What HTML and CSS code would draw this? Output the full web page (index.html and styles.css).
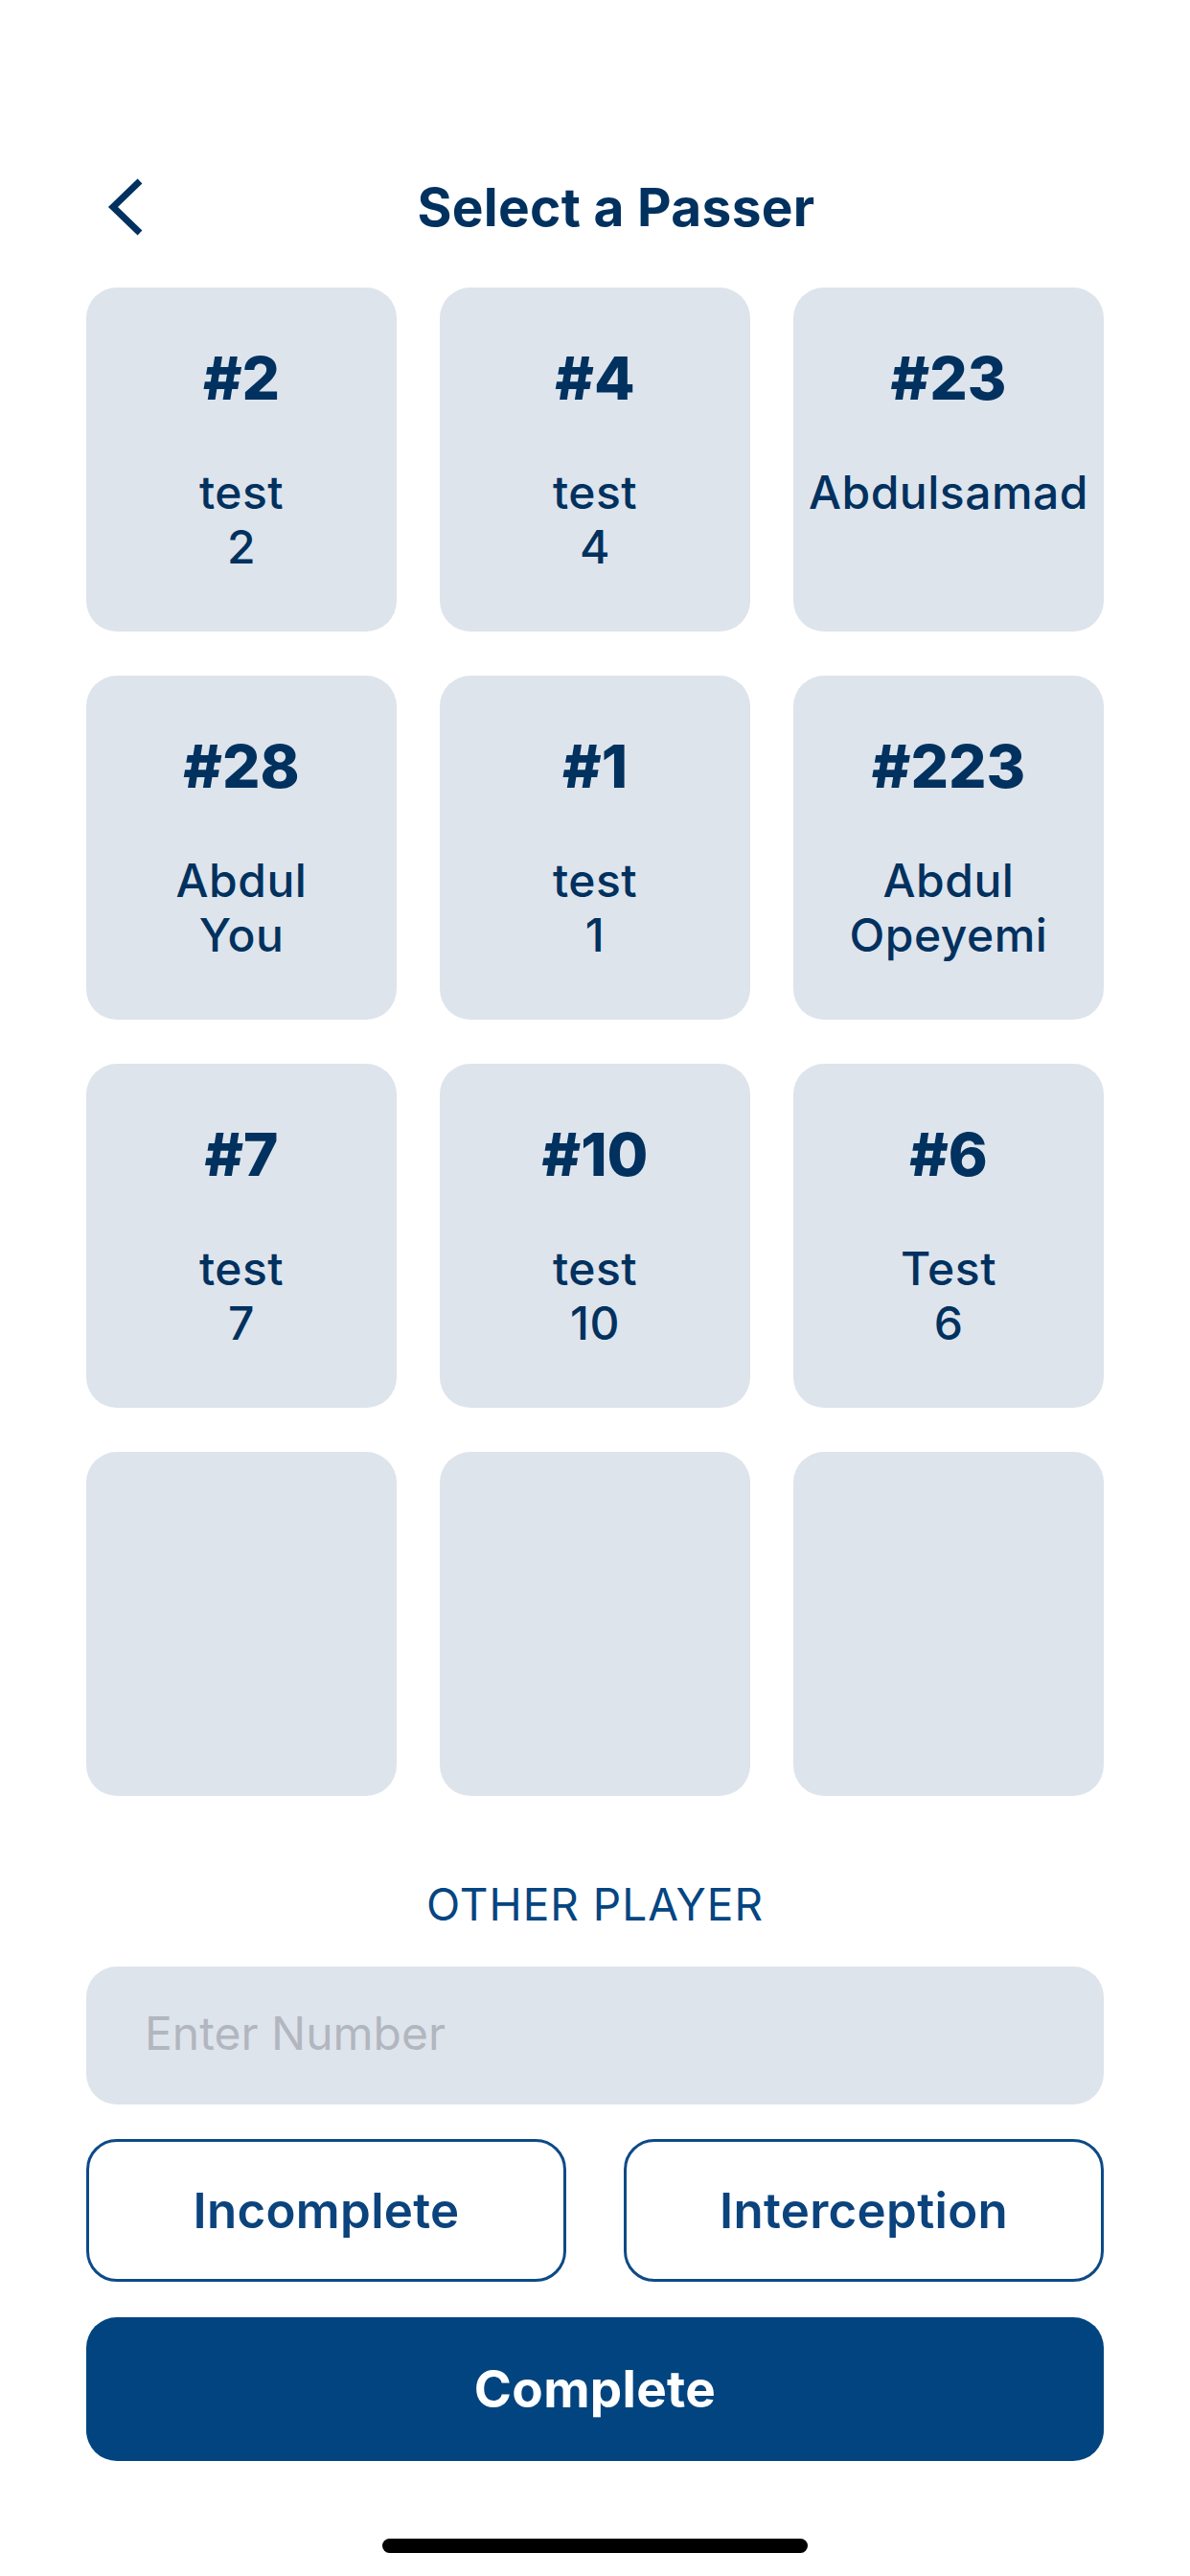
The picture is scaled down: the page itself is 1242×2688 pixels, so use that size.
FILE: index.html
```html
<!DOCTYPE html>
<html lang="en">
<head>
<meta charset="utf-8">
<title>Select a Passer</title>
<link rel="stylesheet" href="styles.css">
</head>
<body>
<div class="page">
  <header class="header">
    <div class="back">
      <svg class="back-icon" width="50" height="70" viewBox="0 0 50 70" aria-hidden="true">
        <polyline points="41,8 13,35 41,62" fill="none" stroke="#00315f" stroke-width="7" stroke-linejoin="miter"/>
      </svg>
    </div>
    <h1 class="title">Select a Passer</h1>
  </header>

  <div class="grid">
    <div class="card"><div class="num">#2</div><div class="name">test<br>2</div></div>
    <div class="card"><div class="num">#4</div><div class="name">test<br>4</div></div>
    <div class="card"><div class="num">#23</div><div class="name">Abdulsamad</div></div>
    <div class="card"><div class="num">#28</div><div class="name">Abdul<br>You</div></div>
    <div class="card"><div class="num">#1</div><div class="name">test<br>1</div></div>
    <div class="card"><div class="num">#223</div><div class="name">Abdul<br>Opeyemi</div></div>
    <div class="card"><div class="num">#7</div><div class="name">test<br>7</div></div>
    <div class="card"><div class="num">#10</div><div class="name">test<br>10</div></div>
    <div class="card"><div class="num">#6</div><div class="name">Test<br>6</div></div>
    <div class="card"></div>
    <div class="card"></div>
    <div class="card"></div>
  </div>

  <div class="label">OTHER PLAYER</div>
  <input class="number-input" type="text" placeholder="Enter Number">

  <div class="actions">
    <button class="btn-outline">Incomplete</button>
    <button class="btn-outline">Interception</button>
  </div>
  <button class="btn-primary">Complete</button>

  <div class="home-indicator"></div>
</div>
</body>
</html>
```

FILE: styles.css
```css
* { box-sizing: border-box; }
html, body {
  margin: 0;
  padding: 0;
  background: #ffffff;
}
body {
  width: 1242px;
  height: 2688px;
  overflow: hidden;
  font-family: Inter, "Liberation Sans", sans-serif;
  color: #00315f;
}
.page {
  padding: 0 90px;
  display: flex;
  flex-direction: column;
}
.header {
  margin-top: 160px;
  height: 112px;
  display: grid;
  grid-template-columns: 80px 1fr;
  align-items: center;
}
.back {
  display: flex;
  align-items: center;
}
.back-icon {
  display: block;
  margin-left: 15px;
}
.title {
  margin: 0;
  padding-right: 36px;
  text-align: center;
  font-size: 55px;
  font-weight: 700;
  line-height: 1;
  color: #00315f;
  letter-spacing: 0.3px;
}
.grid {
  margin-top: 28px;
  display: grid;
  grid-template-columns: repeat(3, 1fr);
  column-gap: 45px;
  row-gap: 46px;
}
.card {
  height: 359px;
  border-radius: 32px;
  background: #dee4ec;
  padding-top: 64px;
  text-align: center;
}
.num {
  font-size: 62px;
  font-weight: 800;
  line-height: 62px;
  color: #00315f;
}
.name {
  margin-top: 59px;
  font-size: 48px;
  font-weight: 500;
  line-height: 57px;
  color: #00315f;
  letter-spacing: 0.5px;
}
.label {
  margin-top: 90px;
  text-align: center;
  font-size: 46px;
  font-weight: 400;
  line-height: 46px;
  color: #044582;
  letter-spacing: 1px;
}
.number-input {
  margin-top: 42px;
  height: 144px;
  width: 100%;
  border: none;
  outline: none;
  border-radius: 32px;
  background: #dee4ec;
  padding: 0 0 6px 61px;
  font-family: Inter, "Liberation Sans", sans-serif;
  font-size: 48px;
  color: #00315f;
}
.number-input::placeholder {
  color: #b2b6be;
}
.actions {
  margin-top: 36px;
  display: grid;
  grid-template-columns: 1fr 1fr;
  column-gap: 60px;
}
.btn-outline {
  height: 149px;
  border: 3px solid #0d4a87;
  border-radius: 32px;
  background: #ffffff;
  font-family: Inter, "Liberation Sans", sans-serif;
  font-size: 51px;
  font-weight: 600;
  color: #0b437d;
  padding: 0;
  letter-spacing: 0.3px;
}
.btn-primary {
  margin-top: 37px;
  height: 150px;
  width: 100%;
  border: none;
  border-radius: 32px;
  background: #02447f;
  font-family: Inter, "Liberation Sans", sans-serif;
  font-size: 53px;
  font-weight: 700;
  color: #ffffff;
  padding: 0;
  letter-spacing: 0.3px;
}
.home-indicator {
  margin: 81px auto 0;
  width: 444px;
  height: 15px;
  border-radius: 8px;
  background: #000000;
}
```
